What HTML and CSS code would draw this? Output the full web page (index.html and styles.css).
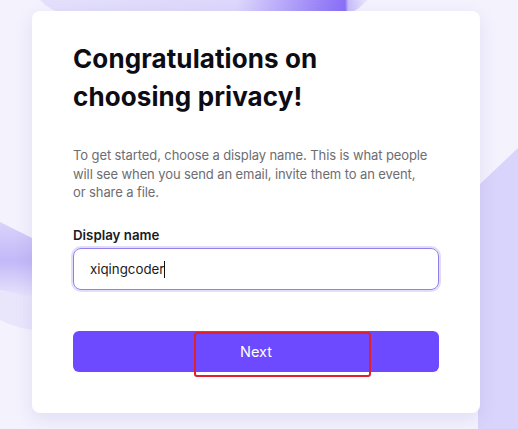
FILE: index.html
```html
<!DOCTYPE html>
<html lang="en">
<head>
    <meta charset="UTF-8">
    <meta name="viewport" content="width=device-width, initial-scale=1.0">
    <title>Choose a display name</title>
    <link rel="stylesheet" href="styles.css">
</head>
<body>
    <!-- decorative background shapes -->
    <svg class="backdrop" width="518" height="429" viewBox="0 0 518 429" aria-hidden="true">
        <defs>
            <linearGradient id="top-blob" x1="0" y1="0" x2="1" y2="0">
                <stop offset="0" stop-color="#e4e0fb"/>
                <stop offset="0.6" stop-color="#ddd7fc"/>
                <stop offset="0.85" stop-color="#9c86f8"/>
                <stop offset="0.93" stop-color="#8a6ff6"/>
                <stop offset="0.94" stop-color="#c8bdfb"/>
                <stop offset="1" stop-color="#ece8fd"/>
            </linearGradient>
            <linearGradient id="left-band" x1="0" y1="0" x2="0" y2="1">
                <stop offset="0" stop-color="#d9d3fb"/>
                <stop offset="0.5" stop-color="#c3b8f8"/>
                <stop offset="1" stop-color="#ebe8fc"/>
            </linearGradient>
        </defs>
        <path d="M40 0 Q50 12 70 14 L350 14 Q360 8 368 0 Z" fill="url(#top-blob)"/>
        <path d="M0 222 L40 242 L40 300 L0 290 Z" fill="url(#left-band)"/>
        <path d="M0 290 L40 300 L40 330 Q20 330 0 320 Z" fill="#e9e6fc"/>
        <path d="M478 186 L518 148 L518 429 L478 429 Z" fill="#d9d4fb"/>
    </svg>

    <div class="card">
        <h1>Congratulations on<br>choosing privacy!</h1>
        <p class="intro">To get started, choose a display name. This is what people will see when you send an email, invite them to an event,<br>or share a file.</p>

        <form class="name-form">
            <label for="display-name">Display name</label>
            <div class="field">
                <span class="field-value">xiqingcoder</span><span class="caret"></span>
            </div>
            <div class="actions">
                <button type="button" class="next-btn">Next</button>
                <span class="highlight"></span>
            </div>
        </form>
    </div>
</body>
</html>
```

FILE: styles.css
```css
body {
    font-family: 'Inter', 'Liberation Sans', sans-serif;
    margin: 0;
    padding: 11px 0 0 32px;
    width: 518px;
    height: 429px;
    box-sizing: border-box;
    background-color: #f4f2fd;
    color: #0c0c14;
    overflow: hidden;
    position: relative;
}
.backdrop {
    position: absolute;
    left: 0;
    top: 0;
}
.card {
    position: relative;
    width: 448px;
    height: 402px;
    box-sizing: border-box;
    padding: 29px 41px 0 41px;
    background: #ffffff;
    border-radius: 8px;
    box-shadow: 0 6px 18px rgba(90, 70, 180, 0.12);
}
h1 {
    margin: 0;
    font-size: 26px;
    line-height: 38px;
    font-weight: 700;
    letter-spacing: 0.1px;
}
.intro {
    margin: 30px 0 0 0;
    font-size: 13px;
    line-height: 18.7px;
    letter-spacing: -0.1px;
    color: #6d6d72;
}
.name-form {
    display: flex;
    flex-direction: column;
}
label {
    margin-top: 24px;
    font-size: 13.3px;
    line-height: 18px;
    font-weight: 600;
    color: #1a1a22;
}
.field {
    display: flex;
    align-items: center;
    height: 42px;
    margin-top: 4px;
    padding: 0 16px;
    box-sizing: border-box;
    border: 1px solid #8f80ee;
    border-radius: 8px;
    box-shadow: 0 0 0 2px #e2ddfb;
    font-size: 13.3px;
}
.field-value {
    color: #1a1a22;
}
.caret {
    width: 1px;
    height: 17px;
    background: #111;
}
.actions {
    position: relative;
    margin-top: 41px;
}
.next-btn {
    width: 100%;
    height: 41px;
    padding: 0;
    border: none;
    border-radius: 6px;
    background-color: #6d4aff;
    color: #ffffff;
    font-family: inherit;
    font-size: 14.5px;
    font-weight: 400;
    cursor: pointer;
}
.highlight {
    position: absolute;
    left: 121px;
    top: 1px;
    width: 177px;
    height: 45px;
    box-sizing: border-box;
    border: 2px solid #e0202c;
    border-radius: 3px;
}
```
